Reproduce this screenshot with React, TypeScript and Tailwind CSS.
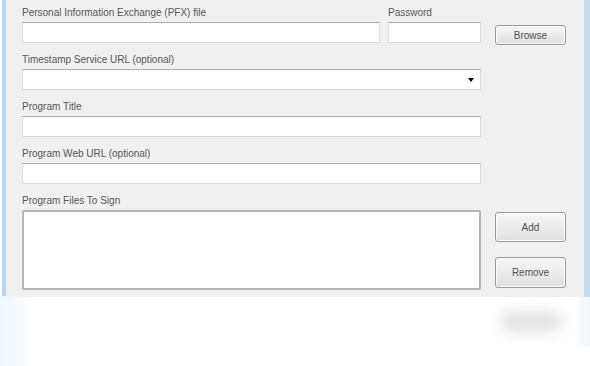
import React from "react";

const font = { fontFamily: '"Liberation Sans", Tahoma, Arial, sans-serif' };

function Label({ children }: { children: React.ReactNode }) {
  return (
    <div className="mb-[3px] h-[12px] text-[10px] leading-[12px] text-[#555555]">
      {children}
    </div>
  );
}

function Field({ className = "" }: { className?: string }) {
  return (
    <div
      className={`h-[21px] border border-[#dadada] border-t-[#ababab] bg-white ${className}`}
    />
  );
}

function Button({ children, className = "" }: { children: React.ReactNode; className?: string }) {
  return (
    <button
      className={`w-[71px] rounded-[3px] border border-[#999999] bg-gradient-to-b from-[#f7f7f7] to-[#e0e0e0] text-[10px] text-[#505050] shadow-[inset_0_0_0_1px_#fbfbfb] ${className}`}
    >
      {children}
    </button>
  );
}

export default function App() {
  return (
    <div className="relative h-[366px] w-[590px] overflow-hidden bg-white" style={font}>
      <div className="flex h-[297px]">
        <div className="ml-[2px] w-[4px] bg-[#bcd5ef]" />
        <div className="flex flex-1 bg-[#f0f0f0] pl-[16px] pt-[7px]">
          <div className="w-[459px]">
            <div className="flex gap-[8px]">
              <div className="w-[358px]">
                <Label>Personal Information Exchange (PFX) file</Label>
                <Field />
              </div>
              <div className="w-[93px]">
                <Label>Password</Label>
                <Field />
              </div>
            </div>

            <div className="mt-[11px]">
              <Label>Timestamp Service URL (optional)</Label>
              <div className="flex h-[21px] items-center justify-end border border-[#dadada] border-t-[#ababab] bg-white pr-[6px]">
                <div className="h-0 w-0 border-x-[3px] border-t-[4px] border-x-transparent border-t-black" />
              </div>
            </div>

            <div className="mt-[11px]">
              <Label>Program Title</Label>
              <Field />
            </div>

            <div className="mt-[11px]">
              <Label>Program Web URL (optional)</Label>
              <Field />
            </div>

            <div className="mt-[11px]">
              <Label>Program Files To Sign</Label>
              <div className="h-[80px] rounded-[2px] border-2 border-[#b4b4b4] bg-white" />
            </div>
          </div>

          <div className="ml-[14px] flex flex-col">
            <Button className="mt-[18px] h-[20px]">Browse</Button>
            <Button className="mt-[167px] h-[30px]">Add</Button>
            <Button className="mt-[15px] h-[31px]">Remove</Button>
          </div>
        </div>
        <div className="w-[6px] bg-[#c8ddf2]" />
      </div>

      {/* soft reflection under the window */}
      <div className="pointer-events-none absolute bottom-0 left-0 h-[70px] w-[36px] bg-gradient-to-r from-[#f0f7fe] to-transparent" />
      <div className="pointer-events-none absolute right-0 top-[297px] h-[50px] w-[16px] bg-gradient-to-l from-[#edf5fc] to-transparent" />
      <div className="pointer-events-none absolute left-[500px] top-[312px] h-[20px] w-[62px] rounded-full bg-[#e2e2e2] blur-[7px]" />
    </div>
  );
}
